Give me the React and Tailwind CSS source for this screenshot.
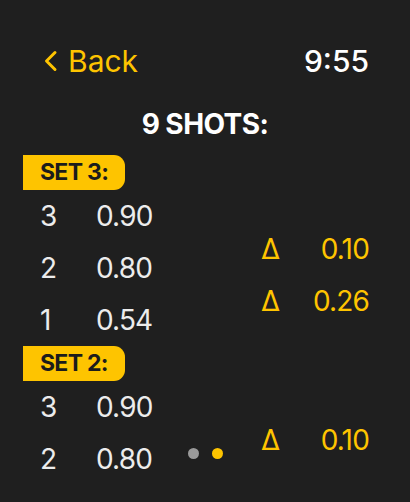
import React from "react";

const sets = [
  {
    name: "SET 3:",
    shots: [
      { n: 3, v: "0.90" },
      { n: 2, v: "0.80" },
      { n: 1, v: "0.54" },
    ],
    deltas: ["0.10", "0.26"],
  },
  {
    name: "SET 2:",
    shots: [
      { n: 3, v: "0.90" },
      { n: 2, v: "0.80" },
    ],
    deltas: ["0.10"],
  },
];

const ShotSet = ({ set }) => (
  <div>
    <div className="ml-[23px] flex h-[35px] w-[102px] items-center rounded-r-[11px] bg-[#fec400] pl-[17px] text-[23px] font-bold leading-none tracking-[-0.03em] text-[#1c1c1c]">
      {set.name}
    </div>
    <div className="flex justify-between pr-[41px]">
      <div className="pl-[40px]">
        {set.shots.map((s, i) => (
          <div key={i} className="flex h-[52px] items-center text-[28px] leading-[52px] tracking-[-0.03em] text-[#ececec]">
            <span className="w-[56px]">{s.n}</span>
            <span>{s.v}</span>
          </div>
        ))}
      </div>
      <div className="w-[108px] pt-[33px]">
        {set.deltas.map((d, i) => (
          <div key={i} className="flex h-[52px] justify-between text-[28px] leading-[52px] tracking-[-0.03em] text-[#fec400]">
            <span>Δ</span>
            <span>{d}</span>
          </div>
        ))}
      </div>
    </div>
  </div>
);

export default function App() {
  return (
    <div
      className="relative h-[502px] w-[410px] overflow-hidden bg-[#1f1f1f]"
      style={{ fontFamily: "Inter, 'Noto Sans', sans-serif" }}
    >
      <div className="flex items-center justify-between pl-[44px] pr-[41px] pt-[43px]">
        <div className="flex items-center text-[#fec400]">
          <svg width="14" height="22" viewBox="0 0 14 22" fill="none" className="mr-[10px]">
            <path d="M11 2.5L2.5 11L11 19.5" stroke="#fec400" strokeWidth="3" strokeLinecap="round" strokeLinejoin="round" />
          </svg>
          <span className="text-[30px] leading-[36px]">Back</span>
        </div>
        <span className="text-[30px] font-medium leading-[36px] text-white">9:55</span>
      </div>
      <div className="mt-[29px] text-center text-[28px] font-bold leading-[32px] tracking-[-0.02em] text-white">
        9 SHOTS:
      </div>
      <div className="mt-[15px]">
        {sets.map((s, i) => (
          <ShotSet key={i} set={s} />
        ))}
      </div>
      <div className="absolute left-0 right-0 top-[448px] flex justify-center gap-[13px]">
        <div className="h-[11px] w-[11px] rounded-full bg-[#9a9a9a]" />
        <div className="h-[11px] w-[11px] rounded-full bg-[#fec400]" />
      </div>
    </div>
  );
}
